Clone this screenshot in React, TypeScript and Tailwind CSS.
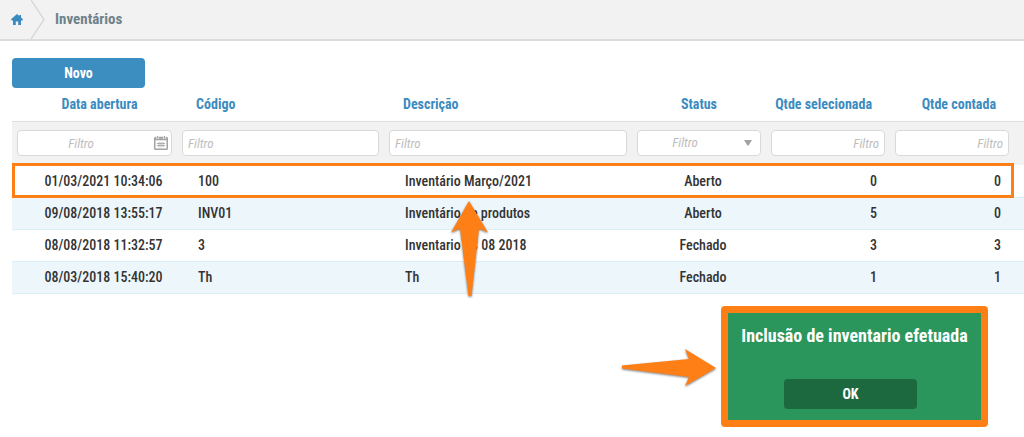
import { useState } from "react";

type Inventory = {
  opened: string;
  code: string;
  description: string;
  status: string;
  selected: number;
  counted: number;
};

const INVENTORIES: Inventory[] = [
  { opened: "01/03/2021 10:34:06", code: "100", description: "Inventário Março/2021", status: "Aberto", selected: 0, counted: 0 },
  { opened: "09/08/2018 13:55:17", code: "INV01", description: "Inventário de produtos", status: "Aberto", selected: 5, counted: 0 },
  { opened: "08/08/2018 11:32:57", code: "3", description: "Inventario 08 08 2018", status: "Fechado", selected: 3, counted: 3 },
  { opened: "08/03/2018 15:40:20", code: "Th", description: "Th", status: "Fechado", selected: 1, counted: 1 },
];

const FIELD =
  "block h-[26px] w-full rounded border border-[#d9d9d9] bg-white px-[5px] text-[13px] italic text-[#888] placeholder:text-[#bdbdbd] focus:outline-none focus:border-[#3c8dc0]";

function HomeIcon() {
  return (
    <svg viewBox="0 0 12 11" className="h-[11px] w-3" fill="#3c8bc0" aria-hidden="true">
      <path d="M6 0 0 5.2l.6 1.2H2V11h2.8V7.4h2.4V11H10V6.4h1.4l.6-1.2L10 3.4V1H8.4v1z" />
    </svg>
  );
}

function CalendarIcon() {
  return (
    <svg viewBox="0 0 14 14" className="h-3.5 w-3.5" fill="none" stroke="#a3a3a3" aria-hidden="true">
      <rect x=".75" y="1.5" width="12.5" height="11.75" rx=".8" strokeWidth="1.5" />
      <path d="M1 3.2h12" strokeWidth="2.2" />
      <path d="M3.6 0v3M10.4 0v3" stroke="#fff" strokeWidth="2.4" />
      <path d="M3.6 0v2.8M10.4 0v2.8" strokeWidth="1.2" />
      <path d="M2.8 7.5h8.4M2.8 9.5h8.4M5 6v5.4M7 6v5.4M9 6v5.4" strokeWidth=".8" />
    </svg>
  );
}

function Breadcrumb() {
  return (
    <nav className="flex h-[41px] items-stretch border-b-2 border-[#dcdcdc] bg-[#f2f2f2]">
      <a href="#home" aria-label="Início" className="flex items-center pl-[11px] pr-2">
        <HomeIcon />
      </a>
      <svg viewBox="0 0 14 40" className="h-full w-3.5" fill="none" stroke="#d2d2d2" strokeWidth="1.2" preserveAspectRatio="none" aria-hidden="true">
        <path d="M0 0 13 20 0 40" />
      </svg>
      <h1 className="flex items-center pl-[10px] text-[15px] font-bold text-[#6f828b]">Inventários</h1>
    </nav>
  );
}

function FilterRow() {
  const [status, setStatus] = useState("");
  return (
    <tr className="h-11 border-t border-[#dedede] bg-[#f2f2f2]">
      <td className="px-[5px]">
        <div className="relative">
          <input aria-label="Filtrar data abertura" placeholder="Filtro" className={`${FIELD} pr-8 text-center`} />
          <button aria-label="Abrir calendário" className="absolute inset-y-0 right-1 flex items-center">
            <CalendarIcon />
          </button>
        </div>
      </td>
      <td className="px-[5px]"><input aria-label="Filtrar código" placeholder="Filtro" className={FIELD} /></td>
      <td className="px-[5px]"><input aria-label="Filtrar descrição" placeholder="Filtro" className={FIELD} /></td>
      <td className="px-[5px]">
        <div className="relative">
          <select
            aria-label="Filtrar status"
            value={status}
            onChange={(e) => setStatus(e.target.value)}
            className="block h-[26px] w-full appearance-none rounded border border-[#d9d9d9] bg-white pr-7 text-center text-[13px] italic text-[#bdbdbd] [text-align-last:center] focus:outline-none"
          >
            <option value="">Filtro</option>
            <option value="Aberto">Aberto</option>
            <option value="Fechado">Fechado</option>
          </select>
          <svg viewBox="0 0 8 6" className="pointer-events-none absolute right-[9px] top-2.5 h-1.5 w-2" fill="#a3a3a3" aria-hidden="true">
            <path d="M0 0h8L4.6 5.4H3.4z" />
          </svg>
        </div>
      </td>
      <td className="px-[5px]"><input aria-label="Filtrar qtde selecionada" placeholder="Filtro" className={`${FIELD} text-right`} /></td>
      <td className="pl-[5px] pr-[15px]"><input aria-label="Filtrar qtde contada" placeholder="Filtro" className={`${FIELD} text-right`} /></td>
    </tr>
  );
}

function InventoryTable() {
  return (
    <table className="w-full table-fixed border-collapse text-sm text-[#333]">
      <colgroup>
        <col className="w-[165px]" />
        <col className="w-[207px]" />
        <col />
        <col className="w-[134px]" />
        <col className="w-[124px]" />
        <col className="w-[134px]" />
      </colgroup>
      <thead>
        <tr className="h-[33px] text-[#3c8bc0]">
          <th className="pl-[10px] font-bold">Data abertura</th>
          <th className="pl-[19px] text-left font-bold">Código</th>
          <th className="pl-[19px] text-left font-bold">Descrição</th>
          <th className="font-bold">Status</th>
          <th className="pr-[18px] text-right font-bold">Qtde selecionada</th>
          <th className="pr-7 text-right font-bold">Qtde contada</th>
        </tr>
      </thead>
      <tbody>
        <FilterRow />
        {INVENTORIES.map((inv, i) => (
          <tr key={inv.opened} className="relative h-8 border-b border-[#dceef5] font-medium odd:bg-[#ecf6fb]">
            <td className="pl-[18px] text-center">
              {inv.opened}
              {i === 0 && (
                <span className="pointer-events-none absolute -top-0.5 -bottom-0.5 left-0 right-[10px] border-[3px] border-[#ff7f17]" />
              )}
            </td>
            <td className="pl-[21px]">{inv.code}</td>
            <td className="pl-[21px]">{inv.description}</td>
            <td className="pl-2 text-center">{inv.status}</td>
            <td className="pr-[13px] text-right">{inv.selected}</td>
            <td className="pr-[23px] text-right">{inv.counted}</td>
          </tr>
        ))}
      </tbody>
    </table>
  );
}

export default function App() {
  const [open, setOpen] = useState(true);

  return (
    <div className="min-h-screen bg-white font-['Roboto_Condensed','Roboto',sans-serif]">
      <Breadcrumb />
      <main className="pl-3 pt-[17px]">
        <button className="block h-[30px] w-[133px] rounded bg-[#3c8dc0] text-sm font-bold text-white hover:bg-[#337ba9]">
          Novo
        </button>

        <div className="relative">
          <InventoryTable />
          <svg
            viewBox="0 0 38 96"
            className="pointer-events-none absolute left-[439px] top-[113px] h-24 w-[38px] overflow-visible drop-shadow-[0_1px_1px_rgba(0,0,0,0.5)]"
            fill="#ff7f17"
            aria-hidden="true"
          >
            <path d="M18 0 37 31.5 28 27.5 20.5 95h-3L9 27.5 0 31.5z" />
          </svg>
        </div>

        {open && (
          <div className="mt-3 flex items-center justify-end gap-[5px] pr-9">
            <svg
              viewBox="0 0 94 38"
              className="mt-1 h-[38px] w-[94px] overflow-visible drop-shadow-[0_1px_1px_rgba(0,0,0,0.5)]"
              fill="#ff7f17"
              aria-hidden="true"
            >
              <path d="M0 16.5 67 10 63 0 94 19 63 37 67 28 0 19.5z" />
            </svg>
            <div role="alertdialog" aria-labelledby="notice" className="flex h-[121px] w-[267px] flex-col items-center justify-between rounded border-[7px] border-[#ff7f17] bg-[#2a965b] pb-[11px] pt-[9px]">
              <p id="notice" className="text-lg font-bold text-white">Inclusão de inventario efetuada</p>
              <button onClick={() => setOpen(false)} className="mr-2 h-[30px] w-[133px] rounded bg-[#1d693f] text-sm font-bold text-white hover:bg-[#185834]">
                OK
              </button>
            </div>
          </div>
        )}
      </main>
    </div>
  );
}
